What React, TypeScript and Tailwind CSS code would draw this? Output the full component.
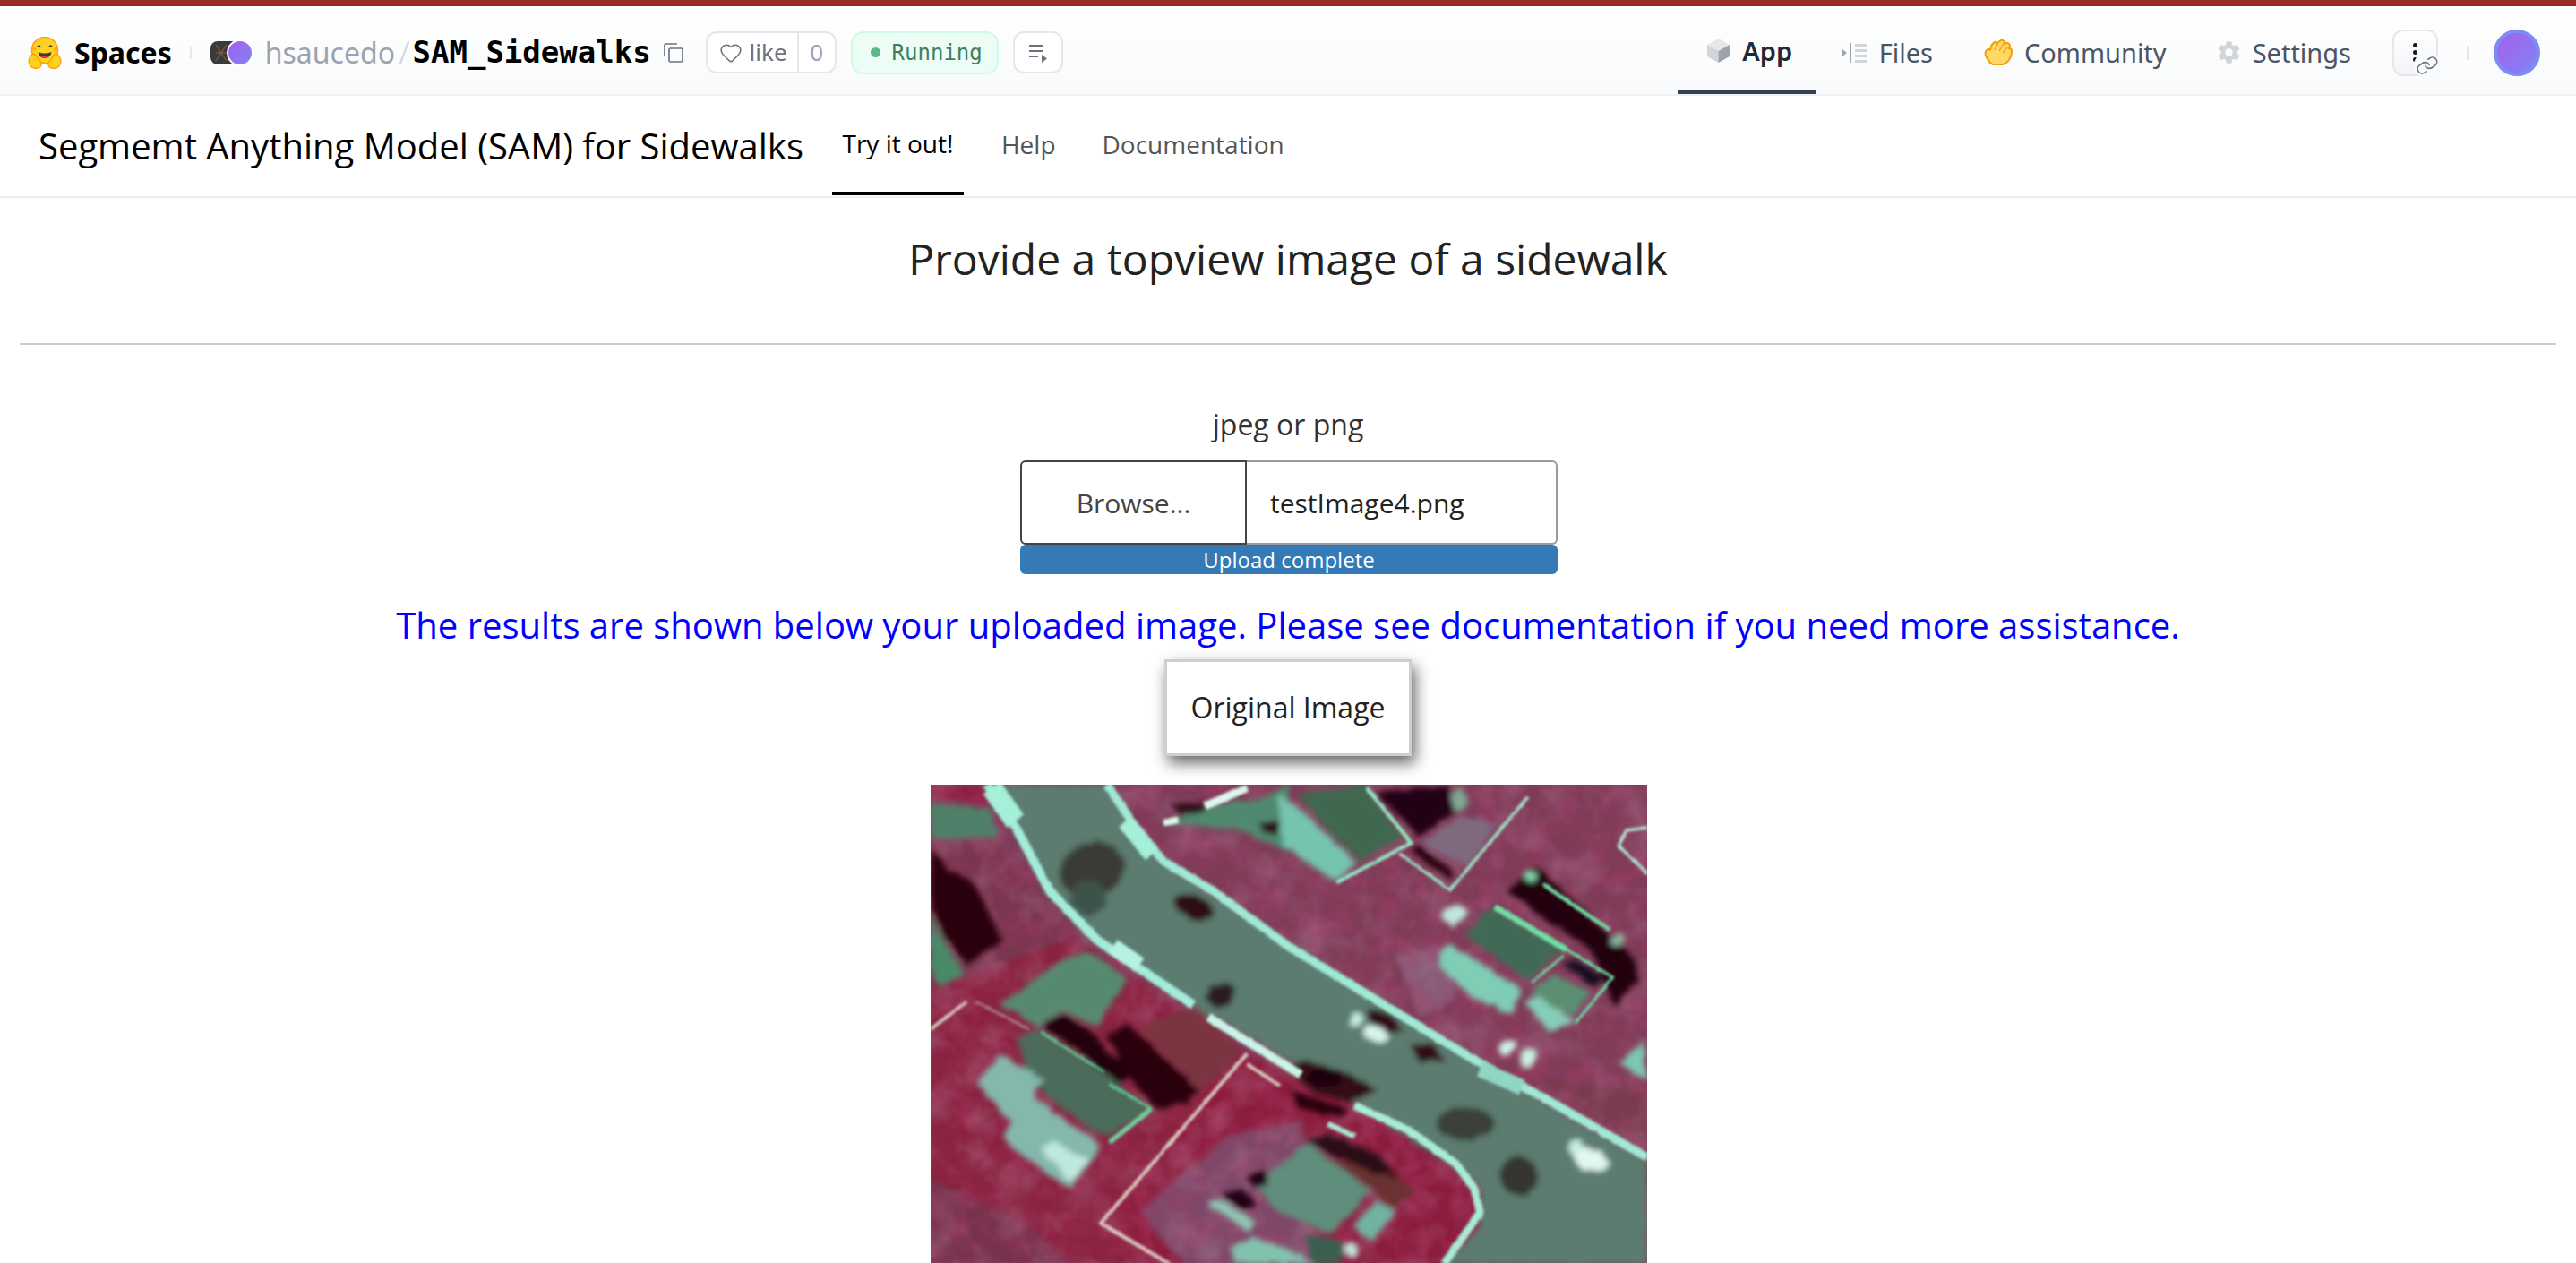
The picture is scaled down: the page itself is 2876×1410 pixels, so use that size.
import { Heart, Link as LinkIcon } from 'lucide-react';
import { IoSettingsSharp } from 'react-icons/io5';

const hf = { fontFamily: '"Noto Sans", sans-serif' };
const mono = { fontFamily: '"DejaVu Sans Mono", monospace' };

function HugLogo() {
  return (
    <svg width="38" height="36" viewBox="0 0 38 36">
      <circle cx="19" cy="15" r="14.5" fill="#FFD21E" stroke="#FF9D0B" strokeWidth="1.5" />
      <path d="M11 11.5q1.5-2.5 3 0M24 11.5q1.500-2.500 3 0" stroke="#3A3B45" strokeWidth="2" fill="none" />
      <path d="M11.5 17q7.5 3 15 0q-1 7-7.5 7t-7.5-7z" fill="#3A3B45" />
      <path d="M15 22q4-2 8 0q-4 3-8 0z" fill="#F94040" />
      <circle cx="7.500" cy="14" r="2" fill="#FF9D0B" opacity=".6" />
      <circle cx="30.500" cy="14" r="2" fill="#FF9D0B" opacity=".6" />
      <path d="M1 27q1-6 4-7q2-2 4 1l6 8q1 5-4 6q-5 1-8-2q-2-3-2-6z" fill="#FFD21E" stroke="#FF9D0B" strokeWidth="1.3" />
      <path d="M37 27q-1-6-4-7q-2-2-4 1l-6 8q-1 5 4 6q5 1 8-2q2-3 2-6z" fill="#FFD21E" stroke="#FF9D0B" strokeWidth="1.3" />
    </svg>
  );
}

function OrgAvatars() {
  return (
    <div className="relative w-[48px] h-[30px] shrink-0">
      <div className="absolute left-0 top-[2px] w-[26px] h-[26px] rounded-l-[8px] bg-[#3a3a3c] overflow-hidden">
        <svg width="26" height="26" viewBox="0 0 26 26">
          <path d="M6 4l12 18M18 4L6 22M6 13h12" stroke="#8a5a3a" strokeWidth="1.2" fill="none" />
        </svg>
      </div>
      <div className="absolute left-[18px] top-0 w-[30px] h-[30px] rounded-full bg-gradient-to-br from-[#a35ef0] to-[#7f83f3] border-2 border-white" />
    </div>
  );
}

function CopyIcon() {
  return (
    <svg width="22" height="22" viewBox="0 0 22 22" fill="none" stroke="#6b7280" strokeWidth="1.7">
      <path d="M1 15V2.200A1.200 1.200 0 0 1 2.200 1H15" />
      <rect x="6" y="6" width="15" height="15" rx="1.500" />
    </svg>
  );
}

function QueueIcon() {
  return (
    <svg width="22" height="22" viewBox="0 0 22 22" fill="#6b7280">
      <rect x="1" y="2" width="16" height="2" />
      <rect x="1" y="8" width="16" height="2" />
      <rect x="1" y="14" width="10" height="2" />
      <path d="M15 13l6 4.500-6 4.500z" />
    </svg>
  );
}

function CubeIcon() {
  return (
    <svg width="25" height="27" viewBox="0 0 25 27">
      <path d="M12.500 0L25 7l-12.500 7L0 7z" fill="#e5e7eb" />
      <path d="M0 7l12.500 7v13L0 20z" fill="#d1d5db" />
      <path d="M25 7l-12.500 7v13L25 20z" fill="#9ca3af" />
    </svg>
  );
}

function FilesIcon() {
  return (
    <svg width="28" height="24" viewBox="0 0 28 24" fill="#d1d5db">
      <path d="M0 8l5 4-5 4z" fill="#9ca3af" />
      <rect x="8" y="1" width="2" height="22" fill="#9ca3af" />
      <rect x="14" y="2" width="13" height="3" />
      <rect x="14" y="8" width="13" height="3" />
      <rect x="14" y="14" width="13" height="3" />
      <rect x="14" y="20" width="13" height="3" />
    </svg>
  );
}

function ClapIcon() {
  return (
    <svg width="32" height="29" viewBox="0 0 32 29">
      <path d="M3 20q-3-5 0-8q3-2 4 0q1-7 5-9q3-1 3 2q3-5 6-4q3 1 1 4q4-2 6 0q2 2 0 5q3 0 3 3q0 8-6 13q-6 4-13 3q-6-2-9-9z" fill="#FFD866" stroke="#F59E0B" strokeWidth="2" strokeLinejoin="round" />
      <path d="M12 12l3-7M17 13l5-8M21 15l5-6" stroke="#F59E0B" strokeWidth="1.300" fill="none" />
    </svg>
  );
}

function SpaceNav() {
  const item = 'flex items-center gap-[13px] h-full';
  return (
    <nav className="ml-auto flex items-center self-stretch text-[#4b5563] text-[29px]" style={hf}>
      <div className="flex items-center gap-[14px] h-full w-[154px] justify-center pl-[8px] border-b-[4px] border-[#374151] font-semibold text-[#1f2937]">
        <CubeIcon />
        <span>App</span>
      </div>
      <div className={`${item} ml-[30px]`}>
        <FilesIcon />
        <span>Files</span>
      </div>
      <div className={`${item} ml-[57px]`}>
        <ClapIcon />
        <span>Community</span>
      </div>
      <div className={`${item} ml-[56px]`}>
        <IoSettingsSharp size={27} color="#d1d5db" />
        <span>Settings</span>
      </div>
      <div className="relative ml-[46px] w-[51px] h-[52px] rounded-[12px] border-2 border-[#e5e7eb] bg-gradient-to-b from-white to-[#f3f4f6] flex items-center justify-center">
        <span className="flex flex-col gap-[3px]">
          <span className="w-[5px] h-[5px] rounded-full bg-[#111827]" />
          <span className="w-[5px] h-[5px] rounded-full bg-[#111827]" />
          <span className="w-[5px] h-[5px] rounded-full bg-[#111827]" />
        </span>
        <span className="absolute -right-[5px] -bottom-[5px] w-[30px] h-[30px] rounded-full bg-[#f9fafb] flex items-center justify-center">
          <LinkIcon size={24} color="#6b7280" strokeWidth={1.6} className="rotate-[10deg]" />
        </span>
      </div>
      <div className="ml-[32px] w-[2px] h-[16px] bg-[#e5e7eb]" />
      <div className="ml-[28px] w-[52px] h-[52px] rounded-full bg-gradient-to-br from-[#a35ef0] to-[#7f83f3] border-[4px] border-[#7b8cf5]" />
    </nav>
  );
}

function SpaceHeader() {
  return (
    <header className="h-[107px] border-t-[7px] border-t-[#992a24] border-b-2 border-b-[#f0f1f3] bg-gradient-to-b from-white to-[#f9fafb] flex items-center pl-[31px] pr-[40px] pt-[5px]" style={hf}>
      <HugLogo />
      <span className="ml-[14px] text-[32px] font-bold text-black">Spaces</span>
      <span className="ml-[20px] w-[2px] h-[14px] bg-[#e5e7eb]" />
      <span className="ml-[21px]"><OrgAvatars /></span>
      <span className="ml-[13px] text-[32px] text-[#9ca3af]">hsaucedo</span>
      <span className="ml-[4px] text-[36px] text-[#d1d5db] font-light">/</span>
      <span className="ml-[3px] text-[34px] font-bold text-black" style={mono}>SAM_Sidewalks</span>
      <span className="ml-[14px]"><CopyIcon /></span>
      <div className="ml-[25px] h-[47px] w-[146px] rounded-[12px] border-2 border-[#e5e7eb] bg-white flex items-center text-[26px] text-[#6b7280]">
        <span className="flex items-center gap-[8px] pl-[13px] w-[102px] h-full border-r-2 border-[#e5e7eb]">
          <Heart size={26} strokeWidth={1.5} />
          like
        </span>
        <span className="flex-1 text-center text-[#9ca3af]">0</span>
      </div>
      <div className="ml-[16px] h-[48px] w-[165px] rounded-[14px] border-2 border-[#d1fae5] bg-[#ecfdf5] flex items-center pl-[20px] gap-[13px] text-[24px] text-[#3f7f5f]" style={mono}>
        <span className="w-[11px] h-[11px] rounded-full bg-[#5ab88a]" />
        Running
      </div>
      <div className="ml-[16px] h-[47px] w-[56px] rounded-[12px] border-2 border-[#e5e7eb] bg-white flex items-center justify-center">
        <QueueIcon />
      </div>
      <SpaceNav />
    </header>
  );
}

function TabBar() {
  return (
    <div className="h-[114px] border-b-2 border-[#eeeeee] flex items-stretch pl-[43px] text-[28px]">
      <h1 className="self-center text-[40px] leading-none text-black pb-[1px]">Segmemt Anything Model (SAM) for Sidewalks</h1>
      <div className="ml-[32px] w-[147px] border-b-[4px] border-black mb-[1px] flex items-center justify-center font-medium text-black pb-[1px]">Try it out!</div>
      <div className="ml-[42px] flex items-center text-[#555555] pb-[4px]">Help</div>
      <div className="ml-[52px] flex items-center text-[#555555] pb-[4px]">Documentation</div>
    </div>
  );
}

// aerial photo, coordinates come from two crops of the picture laid side by side
const lawns: [string, string][] = [
  ['#8a2340', '0,650 480,500 700,640 1050,880 570,1440 800,1568 0,1568'],
  ['#78304e', '0,1290 330,1440 470,1568 0,1568'],
  ['#7a3450', '0,180 190,150 480,500 150,620 0,650'],
  ['#8c1f3c', '0,0 170,0 210,60 0,50'],
  ['#7f3a58', '700,170 800,60 1200,0 2400,0 2400,1230 1850,920 1200,515 800,270'],
  ['#8c1f3c', '1050,880 1420,1040 1800,1280 1840,1330 1840,1450 1710,1568 800,1568 570,1440'],
  ['#7f4767', '700,1400 1000,1150 1240,1100 1300,1568 850,1568'],
  ['#7a3a50', '2050,960 2400,1000 2400,1200 2150,1050'],
  ['#8a5a78', '1560,560 1720,520 1760,700 1640,760'],
];

const shapes: [string, string][] = [
  // road
  ['#5c7c70', '170,0 590,0 700,170 800,270 1200,515 1850,920 2400,1230 2400,1568 1710,1568 1840,1450 1840,1320 1800,1280 1420,1040 1200,900 890,730 560,520 400,370 290,170'],
  // far left
  ['#4f8069', '0,60 200,80 230,170 0,180'],
  ['#2a0610', '0,200 60,280 140,310 240,510 120,590 50,500 0,380'],
  ['#4a8a68', '0,420 70,560 110,620 30,660 0,600'],
  // left house
  ['#7a3540', '800,750 900,740 1040,880 900,1000 700,800'],
  ['#578a70', '230,720 430,580 520,540 660,630 560,790 440,740 360,790'],
  ['#20040c', '370,790 440,745 540,810 600,880 690,940 620,990 510,880'],
  ['#2a0410', '590,830 660,780 790,900 900,1000 860,1040 760,1060 680,980'],
  ['#4b6c5a', '290,830 360,800 590,950 740,1060 590,1160 440,1060 330,960'],
  ['#84b8ac', '160,970 235,880 380,965 340,1020 570,1180 520,1260 465,1325 240,1160 270,1100 240,1080'],
  ['#bfe8de', '370,1190 410,1170 530,1230 470,1300'],
  // top middle house
  ['#4f8a6f', '770,130 960,60 1100,50 1200,0 1200,220 1040,150 860,130'],
  ['#2d0a14', '800,60 910,60 920,90 830,100'],
  ['#2d0a14', '1100,120 1170,120 1170,160 1110,160'],
  ['#406850', '1230,30 1450,0 1580,170 1440,250 1350,170'],
  ['#74c4ad', '1160,30 1260,100 1430,260 1360,320 1180,200'],
  ['#240612', '1490,20 1730,10 1760,90 1630,170'],
  ['#2a0610', '1600,210 1640,200 1760,290 1730,310'],
  ['#7f6a80', '1640,190 1780,100 1900,130 1800,270'],
  // right house
  ['#22060f', '1930,350 2030,270 2360,570 2370,640 2290,720 2210,540'],
  ['#3f6a55', '1790,490 1880,400 2120,540 2000,640'],
  ['#5b8f72', '2000,680 2090,620 2210,680 2150,760'],
  ['#141020', '2120,590 2160,570 2260,630 2220,660'],
  ['#7fcdb5', '1695,585 1730,515 1980,670 1945,750 1820,700'],
  ['#85cdb8', '1990,710 2040,690 2160,780 2070,810'],
  ['#bfe8dc', '1705,430 1755,385 1810,420 1750,465'],
  ['#7dc8b0', '2305,910 2390,840 2400,970'],
  // bottom house
  ['#6a3030', '1330,1230 1480,1240 1630,1330 1540,1390 1480,1320'],
  ['#2a0a18', '1250,1170 1330,1140 1500,1210 1570,1290 1480,1270'],
  ['#5f8e7b', '1090,1310 1260,1170 1480,1330 1340,1470 1150,1390'],
  ['#6fb3a0', '1410,1450 1490,1360 1560,1390 1480,1490'],
  ['#240612', '970,1340 1050,1320 1090,1380 1040,1390'],
  ['#240612', '1060,1280 1120,1260 1130,1310 1080,1320'],
  ['#8cc8b4', '930,1370 960,1355 1090,1430 1060,1460'],
  ['#82c2ad', '1000,1510 1080,1480 1200,1520 1300,1568 1020,1568'],
  ['#3a5f50', '1250,1470 1390,1500 1370,1568 1280,1568'],
  // shadows along the road
  ['#300812', '1450,740 1520,740 1590,810 1500,810'],
  ['#300812', '1600,850 1680,850 1730,900 1640,910'],
  ['#300812', '1200,920 1260,905 1360,930 1500,1000 1400,1040 1280,1010'],
  ['#2a0610', '1200,1000 1300,1030 1400,1060 1380,1090 1240,1060'],
];

const spots: [number, number, number, number, string, number][] = [
  [540, 280, 110, 90, '#3a3a34', -20],
  [530, 370, 60, 60, '#3c5248', 0],
  [880, 400, 70, 38, '#2d0a12', 20],
  [970, 690, 52, 40, '#2c1a24', -20],
  [1790, 1110, 95, 55, '#3a3f38', 0],
  [1970, 1280, 62, 65, '#353632', -30],
  [1320, 960, 60, 30, '#1e0610', 0],
  [1490, 815, 45, 25, '#d8f5ea', 20],
  [1425, 770, 16, 25, '#c5eee0', 30],
  [1930, 860, 30, 20, '#d0f2e6', -30],
  [2000, 895, 25, 35, '#c9eee0', 30],
  [2210, 1225, 62, 35, '#e2f8f0', 20],
  [2160, 1185, 20, 26, '#c8eee2', 10],
  [2010, 300, 20, 18, '#7fd8a8', 0],
  [2300, 510, 28, 18, '#8ab89e', -20],
  [1770, 50, 30, 35, '#7fa896', 0],
  [1410, 1520, 24, 24, '#bfe8dc', 0],
];

const lines: [string, string, number][] = [
  ['M190 0L280 130L400 350L560 510L880 720', '#a4ecda', 30],
  ['M930 760L1200 925L1240 950', '#c9f5e8', 28],
  ['M205 10L285 120', '#a6efd9', 70],
  ['M610 530L700 590', '#b5f2e2', 54],
  ['M590 0L680 130L780 250L950 350L1200 530L1820 900L2100 1050L2400 1220', '#a0e9d5', 28],
  ['M650 120L740 230', '#a6efd9', 52],
  ['M1840 930L1980 990', '#8fd6c4', 52],
  ['M1420 1050L1600 1130L1760 1240L1820 1320L1840 1400L1720 1568', '#a8ecd8', 26],
  ['M1330 1110L1420 1150', '#a8ecd8', 18],
  ['M1060 880L570 1435L800 1568', '#dccdc2', 12],
  ['M1060 915L1170 985', '#dccdc2', 11],
  ['M0 800L120 710', '#dccdc2', 11],
  ['M150 710L330 800', '#a57585', 10],
  ['M370 810L580 940', '#5fc48f', 9],
  ['M740 1060L600 1170', '#6fd29c', 16],
  ['M600 980L740 1060', '#5fc48f', 10],
  ['M1460 10L1610 190L1360 320', '#8ff0c8', 12],
  ['M1570 225L1740 345L2000 40', '#9fe9c8', 10],
  ['M1890 400L2130 540', '#6fe0a5', 20],
  ['M2050 325L2275 475', '#6fe0a5', 13],
  ['M2130 540L2285 630L2160 780', '#6fe0a5', 9],
  ['M2120 560L2010 650', '#6fe0a5', 8],
  ['M2400 140L2330 150L2305 200L2400 290', '#b5ecd9', 10],
  ['M920 70L1060 10', '#dff7ee', 26],
  ['M780 125L830 115', '#dff7ee', 22],
];

function SidewalkImage() {
  return (
    <svg width="800" height="535" viewBox="0 0 2400 1568" preserveAspectRatio="none" className="block shrink-0">
      <defs>
        <filter id="soft" x="-2%" y="-2%" width="104%" height="104%">
          <feTurbulence type="fractalNoise" baseFrequency="0.03" numOctaves="2" seed="3" result="n" />
          <feDisplacementMap in="SourceGraphic" in2="n" scale="24" xChannelSelector="R" yChannelSelector="G" />
          <feGaussianBlur stdDeviation="10" />
        </filter>
        <filter id="thin" x="-2%" y="-2%" width="104%" height="104%">
          <feTurbulence type="fractalNoise" baseFrequency="0.05" numOctaves="2" seed="5" result="n" />
          <feDisplacementMap in="SourceGraphic" in2="n" scale="8" xChannelSelector="R" yChannelSelector="G" />
          <feGaussianBlur stdDeviation="4" />
        </filter>
        <filter id="mottleDark" x="0" y="0" width="100%" height="100%">
          <feTurbulence type="fractalNoise" baseFrequency="0.012" numOctaves="3" seed="7" />
          <feColorMatrix values="0 0 0 0 0.42  0 0 0 0 0.05  0 0 0 0 0.15  2.4 0 0 0 -0.95" />
        </filter>
        <filter id="mottleLight" x="0" y="0" width="100%" height="100%">
          <feTurbulence type="fractalNoise" baseFrequency="0.009" numOctaves="3" seed="11" />
          <feColorMatrix values="0 0 0 0 0.55  0 0 0 0 0.36  0 0 0 0 0.48  2.4 0 0 0 -1" />
        </filter>
      </defs>
      <rect width="2400" height="1568" fill="#7d3a58" />
      <g filter="url(#soft)">
        {lawns.map(([fill, points], i) => (
          <polygon key={i} points={points} fill={fill} />
        ))}
      </g>
      <rect width="2400" height="1568" filter="url(#mottleDark)" opacity="0.4" />
      <rect width="2400" height="1568" filter="url(#mottleLight)" opacity="0.22" />
      <g filter="url(#soft)">
        {shapes.map(([fill, points], i) => (
          <polygon key={i} points={points} fill={fill} />
        ))}
        {spots.map(([cx, cy, rx, ry, fill, rot], i) => (
          <ellipse key={i} cx={cx} cy={cy} rx={rx} ry={ry} fill={fill} transform={`rotate(${rot} ${cx} ${cy})`} />
        ))}
      </g>
      <g filter="url(#thin)" fill="none" strokeLinejoin="round">
        {lines.map(([d, stroke, w], i) => (
          <path key={i} d={d} stroke={stroke} strokeWidth={w} />
        ))}
      </g>
    </svg>
  );
}

export default function App() {
  return (
    <div className="w-[2876px] h-[1410px] overflow-hidden bg-white text-[#333333]" style={{ fontFamily: '"Open Sans", sans-serif' }}>
      <SpaceHeader />
      <TabBar />
      <main className="flex flex-col items-center px-[22px]">
        <h3 className="mt-[37px] text-[48px] leading-[62px] text-[#222222]">Provide a topview image of a sidewalk</h3>
        <hr className="w-full mt-[63px] border-t-2 border-[#cccccc]" />
        <label className="mt-[67px] text-[32px] leading-[44px] text-[#333333]">jpeg or png</label>
        <div className="mt-[18px] w-[600px] ml-[2px]">
          <div className="flex h-[94px] text-[30px]">
            <div className="w-[253px] rounded-l-[6px] border-2 border-[#444444] flex items-center justify-center text-[#444444]">Browse...</div>
            <div className="flex-1 rounded-r-[6px] border-2 border-l-0 border-[#999aa5] flex items-center pl-[26px] text-[#222222]">testImage4.png</div>
          </div>
          <div className="h-[33px] rounded-[6px] bg-[#337ab7] text-white text-[24px] leading-[33px] text-center">Upload complete</div>
        </div>
        <p className="mt-[30px] text-[40px] leading-[54px] text-[#0000ff] whitespace-nowrap">The results are shown below your uploaded image. Please see documentation if you need more assistance.</p>
        <div className="mt-[11px] w-[276px] h-[108px] border-[3px] border-[#cfcfcf] bg-white flex items-center justify-center text-[32px] text-[#222222] shadow-[4px_8px_16px_rgba(0,0,0,0.6)]">Original Image</div>
        <div className="mt-[32px] ml-[2px]">
          <SidewalkImage />
        </div>
      </main>
    </div>
  );
}
